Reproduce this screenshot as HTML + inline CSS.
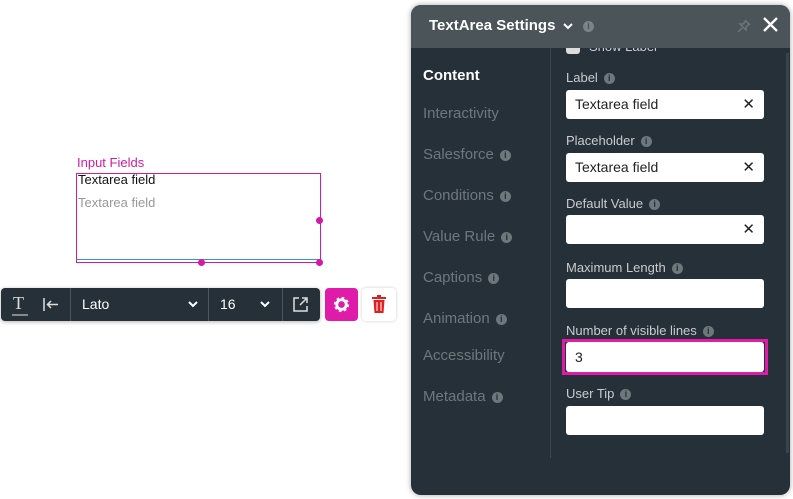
<!DOCTYPE html>
<html><head><style>
*{box-sizing:border-box;margin:0;padding:0}
body{width:793px;height:499px;background:#fff;position:relative;overflow:hidden;font-family:"Liberation Sans",sans-serif}
.abs{position:absolute}
.panel{left:411px;top:5px;width:379px;height:490px;background:#263038;border-radius:10px;overflow:hidden;box-shadow:0 0 6px rgba(0,0,0,.35)}
.hdr{left:0;top:0;width:379px;height:43px;background:#4a5459}
.nav{left:12px;font-size:15px;color:#6e777c}
.info{display:inline-block;width:11px;height:11px;border-radius:50%;background:#6e777c;color:#263038;font-size:9px;line-height:11px;text-align:center;font-weight:bold;vertical-align:1px;margin-left:6px}
.lbl{left:155px;font-size:13px;color:#c8ccce}
.inp{left:155px;width:198px;height:29px;background:#fff;border-radius:3px;font-size:14px;color:#222;padding-left:9px;line-height:29px}
.x{position:absolute;right:9px;top:0;font-size:15px;color:#222}
</style></head><body>
<div class="abs" style="left:77px;top:155px;font-size:13px;color:#d21aa8">Input Fields</div>
<div class="abs" style="left:76px;top:173px;width:245px;height:90px;border:1px solid #d21aa8"></div>
<div class="abs" style="left:77px;top:259px;width:243px;height:1px;background:#3a8ee6"></div>
<div class="abs" style="left:78px;top:172px;font-size:13px;color:#111">Textarea field</div>
<div class="abs" style="left:78px;top:195px;font-size:13px;color:#999">Textarea field</div>
<div class="abs" style="left:316px;top:217px;width:7px;height:7px;border-radius:50%;background:#d21aa8"></div>
<div class="abs" style="left:198px;top:259px;width:7px;height:7px;border-radius:50%;background:#d21aa8"></div>
<div class="abs" style="left:316px;top:259px;width:7px;height:7px;border-radius:50%;background:#d21aa8"></div>

<div class="abs" style="left:1px;top:288px;width:319px;height:33px;background:#263038;border-radius:4px;box-shadow:0 1px 4px rgba(0,0,0,.3);color:#fff;font-size:14px">
 <div class="abs" style="left:12px;top:5px;font-family:'Liberation Serif';font-size:18px;color:#ddd">T</div>
 <div class="abs" style="left:11px;top:26px;width:16px;height:2px;background:#888"></div>
 <svg class="abs" style="left:42px;top:10px" width="16" height="13" viewBox="0 0 16 13" fill="none" stroke="#ddd" stroke-width="1.5"><path d="M1 0v13M4 6.5h11M8 3L4.5 6.5 8 10"/></svg>
 <div class="abs" style="left:69px;top:0;width:1px;height:33px;background:#4c565c"></div>
 <div class="abs" style="left:81px;top:8px">Lato</div>
 <svg class="abs" style="left:187px;top:13px" width="10" height="7" viewBox="0 0 10 7" fill="none" stroke="#fff" stroke-width="2"><path d="M1 1l4 4 4-4"/></svg>
 <div class="abs" style="left:207px;top:0;width:1px;height:33px;background:#4c565c"></div>
 <div class="abs" style="left:219px;top:8px">16</div>
 <svg class="abs" style="left:259px;top:13px" width="10" height="7" viewBox="0 0 10 7" fill="none" stroke="#fff" stroke-width="2"><path d="M1 1l4 4 4-4"/></svg>
 <div class="abs" style="left:281px;top:0;width:1px;height:33px;background:#4c565c"></div>
 <svg class="abs" style="left:292px;top:9px" width="15" height="15" viewBox="0 0 15 15" fill="none" stroke="#ddd" stroke-width="1.5"><path d="M6 1H1v13h13V9M9 1h5v5M14 1L7 8"/></svg>
</div>
<div class="abs" style="left:325px;top:288px;width:33px;height:33px;background:#e01aa9;border-radius:4px"></div>
<svg class="abs" style="left:332px;top:295px" width="19" height="19" viewBox="0 0 20 20"><circle cx="10" cy="10" r="6" fill="none" stroke="#fff" stroke-width="4" stroke-dasharray="2.4 2.3"/><circle cx="10" cy="10" r="5" fill="none" stroke="#fff" stroke-width="3"/></svg>
<div class="abs" style="left:362px;top:288px;width:34px;height:33px;background:#fff;border-radius:4px;box-shadow:0 0 3px rgba(0,0,0,.2)"></div>
<svg class="abs" style="left:371px;top:295px" width="16" height="18" viewBox="0 0 16 18"><rect x="1" y="2" width="14" height="2" fill="#e02020"/><rect x="6" y="0" width="4" height="2" fill="#e02020"/><path d="M2.5 5h11l-1 13h-9z" fill="#e02020"/><path d="M6 7v9M10 7v9" stroke="#fff" stroke-width="1"/></svg>

<div class="abs panel">
 <div class="abs" style="left:155px;top:35px;width:14px;height:14px;background:#ddd;border-radius:3px"></div>
 <div class="abs" style="left:178px;top:34px;font-size:13px;color:#c8ccce">Show Label</div>
 <div class="abs hdr"></div>
 <div class="abs" style="left:18px;top:12px;color:#fff;font-weight:bold;font-size:15px">TextArea Settings</div>
 <svg class="abs" style="left:152px;top:18px" width="10" height="7" viewBox="0 0 10 7" fill="none" stroke="#fff" stroke-width="2"><path d="M1 1l4 4 4-4"/></svg>
 <span class="abs info" style="left:172px;top:16px;background:#7a8388;color:#4a5459;margin:0">i</span>
 <svg class="abs" style="left:326px;top:14px" width="14" height="14" viewBox="0 0 14 14" fill="none" stroke="#6c757a" stroke-width="1.5"><path d="M8 1l5 5M9 2l-3 3-3 0 6 6 0-3 3-3M5 9l-4 4"/></svg>
 <svg class="abs" style="left:352px;top:12px" width="15" height="15" viewBox="0 0 15 15" stroke="#fff" stroke-width="2.3"><path d="M1 1l13 13M14 1L1 14"/></svg>
 <div class="abs" style="left:139px;top:43px;width:1px;height:410px;background:#3d474d"></div>
 <div class="abs" style="left:375px;top:48px;width:3px;height:400px;background:#3a4349"></div>
 <div class="abs nav" style="top:62px;color:#fff;font-weight:bold">Content</div>
 <div class="abs nav" style="top:100px">Interactivity</div>
 <div class="abs nav" style="top:141px">Salesforce<span class="info">i</span></div>
 <div class="abs nav" style="top:182px">Conditions<span class="info">i</span></div>
 <div class="abs nav" style="top:223px">Value Rule<span class="info">i</span></div>
 <div class="abs nav" style="top:264px">Captions<span class="info">i</span></div>
 <div class="abs nav" style="top:305px">Animation<span class="info">i</span></div>
 <div class="abs nav" style="top:342px">Accessibility</div>
 <div class="abs nav" style="top:383px">Metadata<span class="info">i</span></div>

 <div class="abs lbl" style="top:65px">Label<span class="info">i</span></div>
 <div class="abs inp" style="top:85px">Textarea field<span class="x">✕</span></div>
 <div class="abs lbl" style="top:128px">Placeholder<span class="info">i</span></div>
 <div class="abs inp" style="top:148px">Textarea field<span class="x">✕</span></div>
 <div class="abs lbl" style="top:191px">Default Value<span class="info">i</span></div>
 <div class="abs inp" style="top:210px"><span class="x">✕</span></div>
 <div class="abs lbl" style="top:255px">Maximum Length<span class="info">i</span></div>
 <div class="abs inp" style="top:274px"></div>
 <div class="abs lbl" style="top:318px">Number of visible lines<span class="info">i</span></div>
 <div class="abs" style="left:151px;top:334px;width:206px;height:36px;border:3px solid #e01aa9"></div>
 <div class="abs inp" style="top:337px;height:30px;line-height:30px">3</div>
 <div class="abs lbl" style="top:381px">User Tip<span class="info">i</span></div>
 <div class="abs inp" style="top:401px"></div>
</div>
</body></html>
